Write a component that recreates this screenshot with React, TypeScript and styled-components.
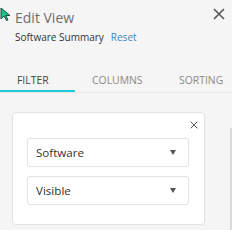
import React, { useState } from 'react';
import styled, { createGlobalStyle } from 'styled-components';

const GlobalStyle = createGlobalStyle`
  html, body {
    margin: 0;
    padding: 0;
    background: #f5f5f5;
    font-family: "Open Sans", "Liberation Sans", sans-serif;
  }
  * { box-sizing: border-box; }
`;

const tabs = ['FILTER', 'COLUMNS', 'SORTING'];
const tabWidths = [75, 87, 70];

const filters = ['Software', 'Visible'];

const CloseIcon = ({ size, stroke }: { size: number; stroke: number }) => (
  <svg width={size} height={size} viewBox="0 0 12 12">
    <path d="M1 1 L11 11 M11 1 L1 11" stroke="currentColor" strokeWidth={stroke} fill="none" />
  </svg>
);

const App = () => {
  const [active, setActive] = useState(0);

  return (
    <Panel>
      <GlobalStyle />
      <Cursor width="11" height="14" viewBox="0 0 11 14">
        <path d="M1 1 L1 12 L4 9 L6.5 13.5 L8 12.8 L5.8 8.5 L10 8.5 Z" fill="#1fc28a" stroke="#1b4d3a" strokeWidth="1" />
      </Cursor>
      <Header>
        <div>
          <Title>Edit View</Title>
          <SubRow>
            <ViewName>Software Summary</ViewName>
            <ResetLink>Reset</ResetLink>
          </SubRow>
        </div>
        <HeaderClose><CloseIcon size={12} stroke={1.6} /></HeaderClose>
      </Header>

      <TabBar>
        {tabs.map((t, i) => (
          <Tab key={t} $active={i === active} $width={tabWidths[i]} onClick={() => setActive(i)}>
            {t}
          </Tab>
        ))}
      </TabBar>

      <Content>
        <FilterCard>
          <CardTop>
            <CardClose><CloseIcon size={8} stroke={1.5} /></CardClose>
          </CardTop>
          <Selects>
            {filters.map((f) => (
              <Select key={f}>
                <span>{f}</span>
                <Arrow viewBox="0 0 6 5" width="6" height="5">
                  <path d="M0 0 L6 0 L3 5 Z" fill="#555" />
                </Arrow>
              </Select>
            ))}
          </Selects>
        </FilterCard>
        <ScrollThumb />
      </Content>
    </Panel>
  );
};

export default App;

const Panel = styled.div`
  position: relative;
  width: 232px;
  height: 230px;
  background: #f5f5f5;
  overflow: hidden;
`;

const Cursor = styled.svg`
  position: absolute;
  left: 0;
  top: 7px;
`;

const Header = styled.div`
  display: flex;
  justify-content: space-between;
  align-items: flex-start;
  padding: 8px 7px 0 15px;
  height: 70px;
`;

const Title = styled.div`
  font-size: 14px;
  line-height: 19px;
  color: #6e6e6e;
`;

const SubRow = styled.div`
  display: flex;
  gap: 7px;
  margin-top: 3px;
  font-size: 10px;
  line-height: 15px;
`;

const ViewName = styled.span`
  color: #333;
`;

const ResetLink = styled.span`
  color: #3a8cc4;
  cursor: pointer;
`;

const HeaderClose = styled.div`
  display: flex;
  color: #555;
  cursor: pointer;
`;

const TabBar = styled.div`
  display: flex;
  height: 23px;
  border-bottom: 1px solid #e6e6e6;
`;

const Tab = styled.div<{ $active: boolean; $width: number }>`
  width: ${(p) => p.$width}px;
  flex-shrink: 0;
  padding-left: 17px;
  font-size: 10.4px;
  line-height: 20px;
  color: ${(p) => (p.$active ? '#444' : '#8a8a8a')};
  border-bottom: 2px solid ${(p) => (p.$active ? '#1ec8d8' : 'transparent')};
  cursor: pointer;
  white-space: nowrap;
`;

const Content = styled.div`
  position: relative;
  padding: 19px 27px 0 12px;
`;

const FilterCard = styled.div`
  width: 193px;
  background: #fff;
  border: 1px solid #e2e2e2;
  border-radius: 4px;
  padding: 0 15px 19px 14px;
`;

const CardTop = styled.div`
  display: flex;
  justify-content: flex-end;
  height: 25px;
  padding: 8px 0 0;
  margin-right: -9px;
`;

const CardClose = styled.div`
  display: flex;
  color: #555;
  cursor: pointer;
`;

const Selects = styled.div`
  display: flex;
  flex-direction: column;
  gap: 9px;
`;

const Select = styled.div`
  display: flex;
  align-items: center;
  justify-content: space-between;
  height: 29px;
  padding: 0 12px 0 8px;
  border: 1px solid #e2e2e2;
  border-radius: 3px;
  background: #fff;
  font-size: 11.6px;
  color: #333;
`;

const Arrow = styled.svg`
  display: block;
`;

const ScrollThumb = styled.div`
  position: absolute;
  right: 0;
  top: 35px;
  width: 2px;
  height: 120px;
  background: #d9d9d9;
`;
